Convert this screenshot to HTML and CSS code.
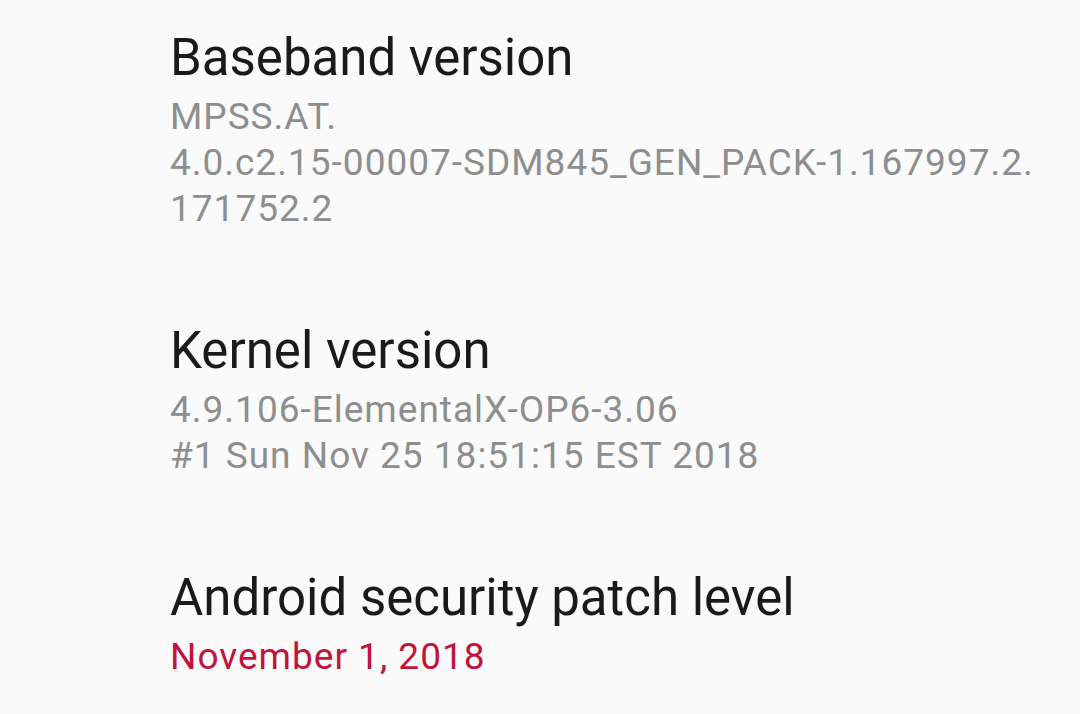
FILE: index.html
```html
<!DOCTYPE html>
<html lang="en">
<head>
    <meta charset="UTF-8">
    <title>About phone</title>
    <link rel="stylesheet" href="styles.css">
</head>
<body>
    <div class="pref-list">
        <!-- Baseband -->
        <div class="pref">
            <div class="pref-title">Baseband version</div>
            <div class="pref-summary">MPSS.AT.<br>4.0.c2.15-00007-SDM845_GEN_PACK-1.167997.2.<br>171752.2</div>
        </div>

        <!-- Kernel -->
        <div class="pref">
            <div class="pref-title">Kernel version</div>
            <div class="pref-summary">4.9.106-ElementalX-OP6-3.06<br>#1 Sun Nov 25 18:51:15 EST 2018</div>
        </div>

        <!-- Security patch -->
        <div class="pref">
            <div class="pref-title">Android security patch level</div>
            <div class="pref-summary accent">November 1, 2018</div>
        </div>
    </div>
</body>
</html>
```

FILE: styles.css
```css
body {
    margin: 0;
    background-color: #fafafa;
    font-family: Roboto, "Noto Sans", sans-serif;
    overflow: hidden;
}

.pref-list {
    padding: 28px 0 0 170px;
    display: flex;
    flex-direction: column;
    gap: 89px;
}

.pref-title {
    font-size: 51px;
    line-height: 60px;
    color: #1a1a1a;
}

.pref-summary {
    margin-top: 6px;
    font-size: 37px;
    line-height: 46px;
    letter-spacing: 1px;
    color: #8e8e8e;
}

.pref-summary.accent {
    color: #c0143c;
}
```
